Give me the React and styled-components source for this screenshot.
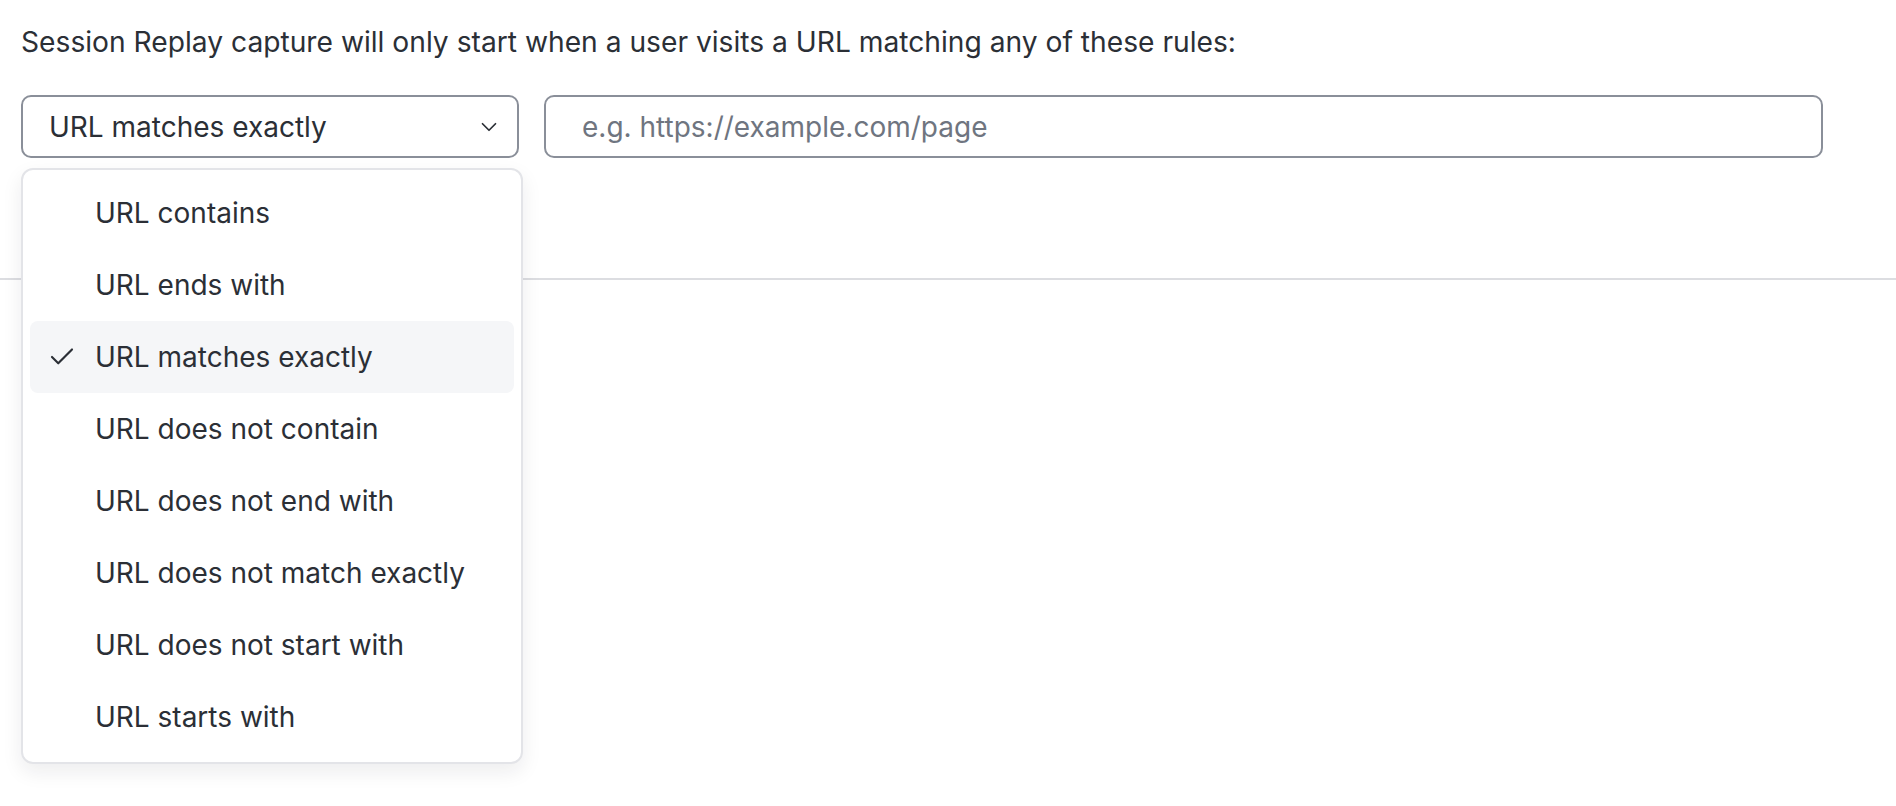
import styled, { createGlobalStyle } from "styled-components";
import { Check, ChevronDown } from "lucide-react";

const GlobalStyle = createGlobalStyle`
  html, body {
    margin: 0;
    padding: 0;
    background: #ffffff;
  }
  body {
    font-family: Inter, "Noto Sans", "Liberation Sans", sans-serif;
    color: #2b2f36;
    -webkit-font-smoothing: antialiased;
  }
`;

const Page = styled.div`
  min-height: 806px;
  background: #ffffff;
`;

const Section = styled.section`
  padding: 21px 21px 0;
`;

const Heading = styled.p`
  margin: 0;
  font-size: 28.2px;
  line-height: 42px;
  color: #2b2f36;
`;

const RuleRow = styled.div`
  display: flex;
  align-items: flex-start;
  gap: 25px;
  margin-top: 32px;
`;

const SelectWrap = styled.div`
  position: relative;
  width: 498px;
`;

const SelectButton = styled.button`
  box-sizing: border-box;
  width: 100%;
  height: 63px;
  display: flex;
  align-items: center;
  justify-content: space-between;
  padding: 0 15px 0 26px;
  border: 2px solid #8a8f99;
  border-radius: 10px;
  background: #ffffff;
  font-family: inherit;
  font-size: 28px;
  color: #2b2f36;
  cursor: pointer;
`;

const UrlInput = styled.input`
  box-sizing: border-box;
  width: 1279px;
  height: 63px;
  padding: 0 36px;
  border: 2px solid #8a8f99;
  border-radius: 10px;
  font-family: inherit;
  font-size: 28px;
  color: #2b2f36;
  outline: none;

  &::placeholder {
    color: #6f7580;
  }
`;

const Menu = styled.ul`
  position: absolute;
  top: calc(100% + 10px);
  left: 0;
  z-index: 10;
  box-sizing: border-box;
  width: 502px;
  margin: 0;
  padding: 7px 7px 9px;
  list-style: none;
  background: #ffffff;
  border: 2px solid #e3e4e8;
  border-radius: 12px;
  box-shadow: 0 8px 20px rgba(20, 24, 35, 0.08);
`;

const MenuItem = styled.li`
  display: flex;
  align-items: center;
  gap: 18px;
  height: 72px;
  padding-left: 17px;
  border-radius: 8px;
  font-size: 28px;
  color: #2b2f36;
  background: ${(p) => (p.$active ? "#f5f6f8" : "transparent")};
`;

const IconSlot = styled.span`
  display: flex;
  width: 30px;
  height: 30px;
  color: #2b2f36;
`;

const Divider = styled.div`
  height: 2px;
  margin-top: 120px;
  background: #dcdde1;
`;

const options = [
  "URL contains",
  "URL ends with",
  "URL matches exactly",
  "URL does not contain",
  "URL does not end with",
  "URL does not match exactly",
  "URL does not start with",
  "URL starts with",
];

export default function App() {
  const selected = "URL matches exactly";
  return (
    <Page>
      <GlobalStyle />
      <Section>
        <Heading>
          Session Replay capture will only start when a user visits a URL matching any of these rules:
        </Heading>
        <RuleRow>
          <SelectWrap>
            <SelectButton type="button">
              <span>{selected}</span>
              <ChevronDown size={26} strokeWidth={1.6} color="#2b2f36" />
            </SelectButton>
            <Menu>
              {options.map((opt) => (
                <MenuItem key={opt} $active={opt === selected}>
                  <IconSlot>{opt === selected && <Check size={30} strokeWidth={1.7} />}</IconSlot>
                  {opt}
                </MenuItem>
              ))}
            </Menu>
          </SelectWrap>
          <UrlInput placeholder="e.g. https://example.com/page" />
        </RuleRow>
      </Section>
      <Divider />
    </Page>
  );
}
